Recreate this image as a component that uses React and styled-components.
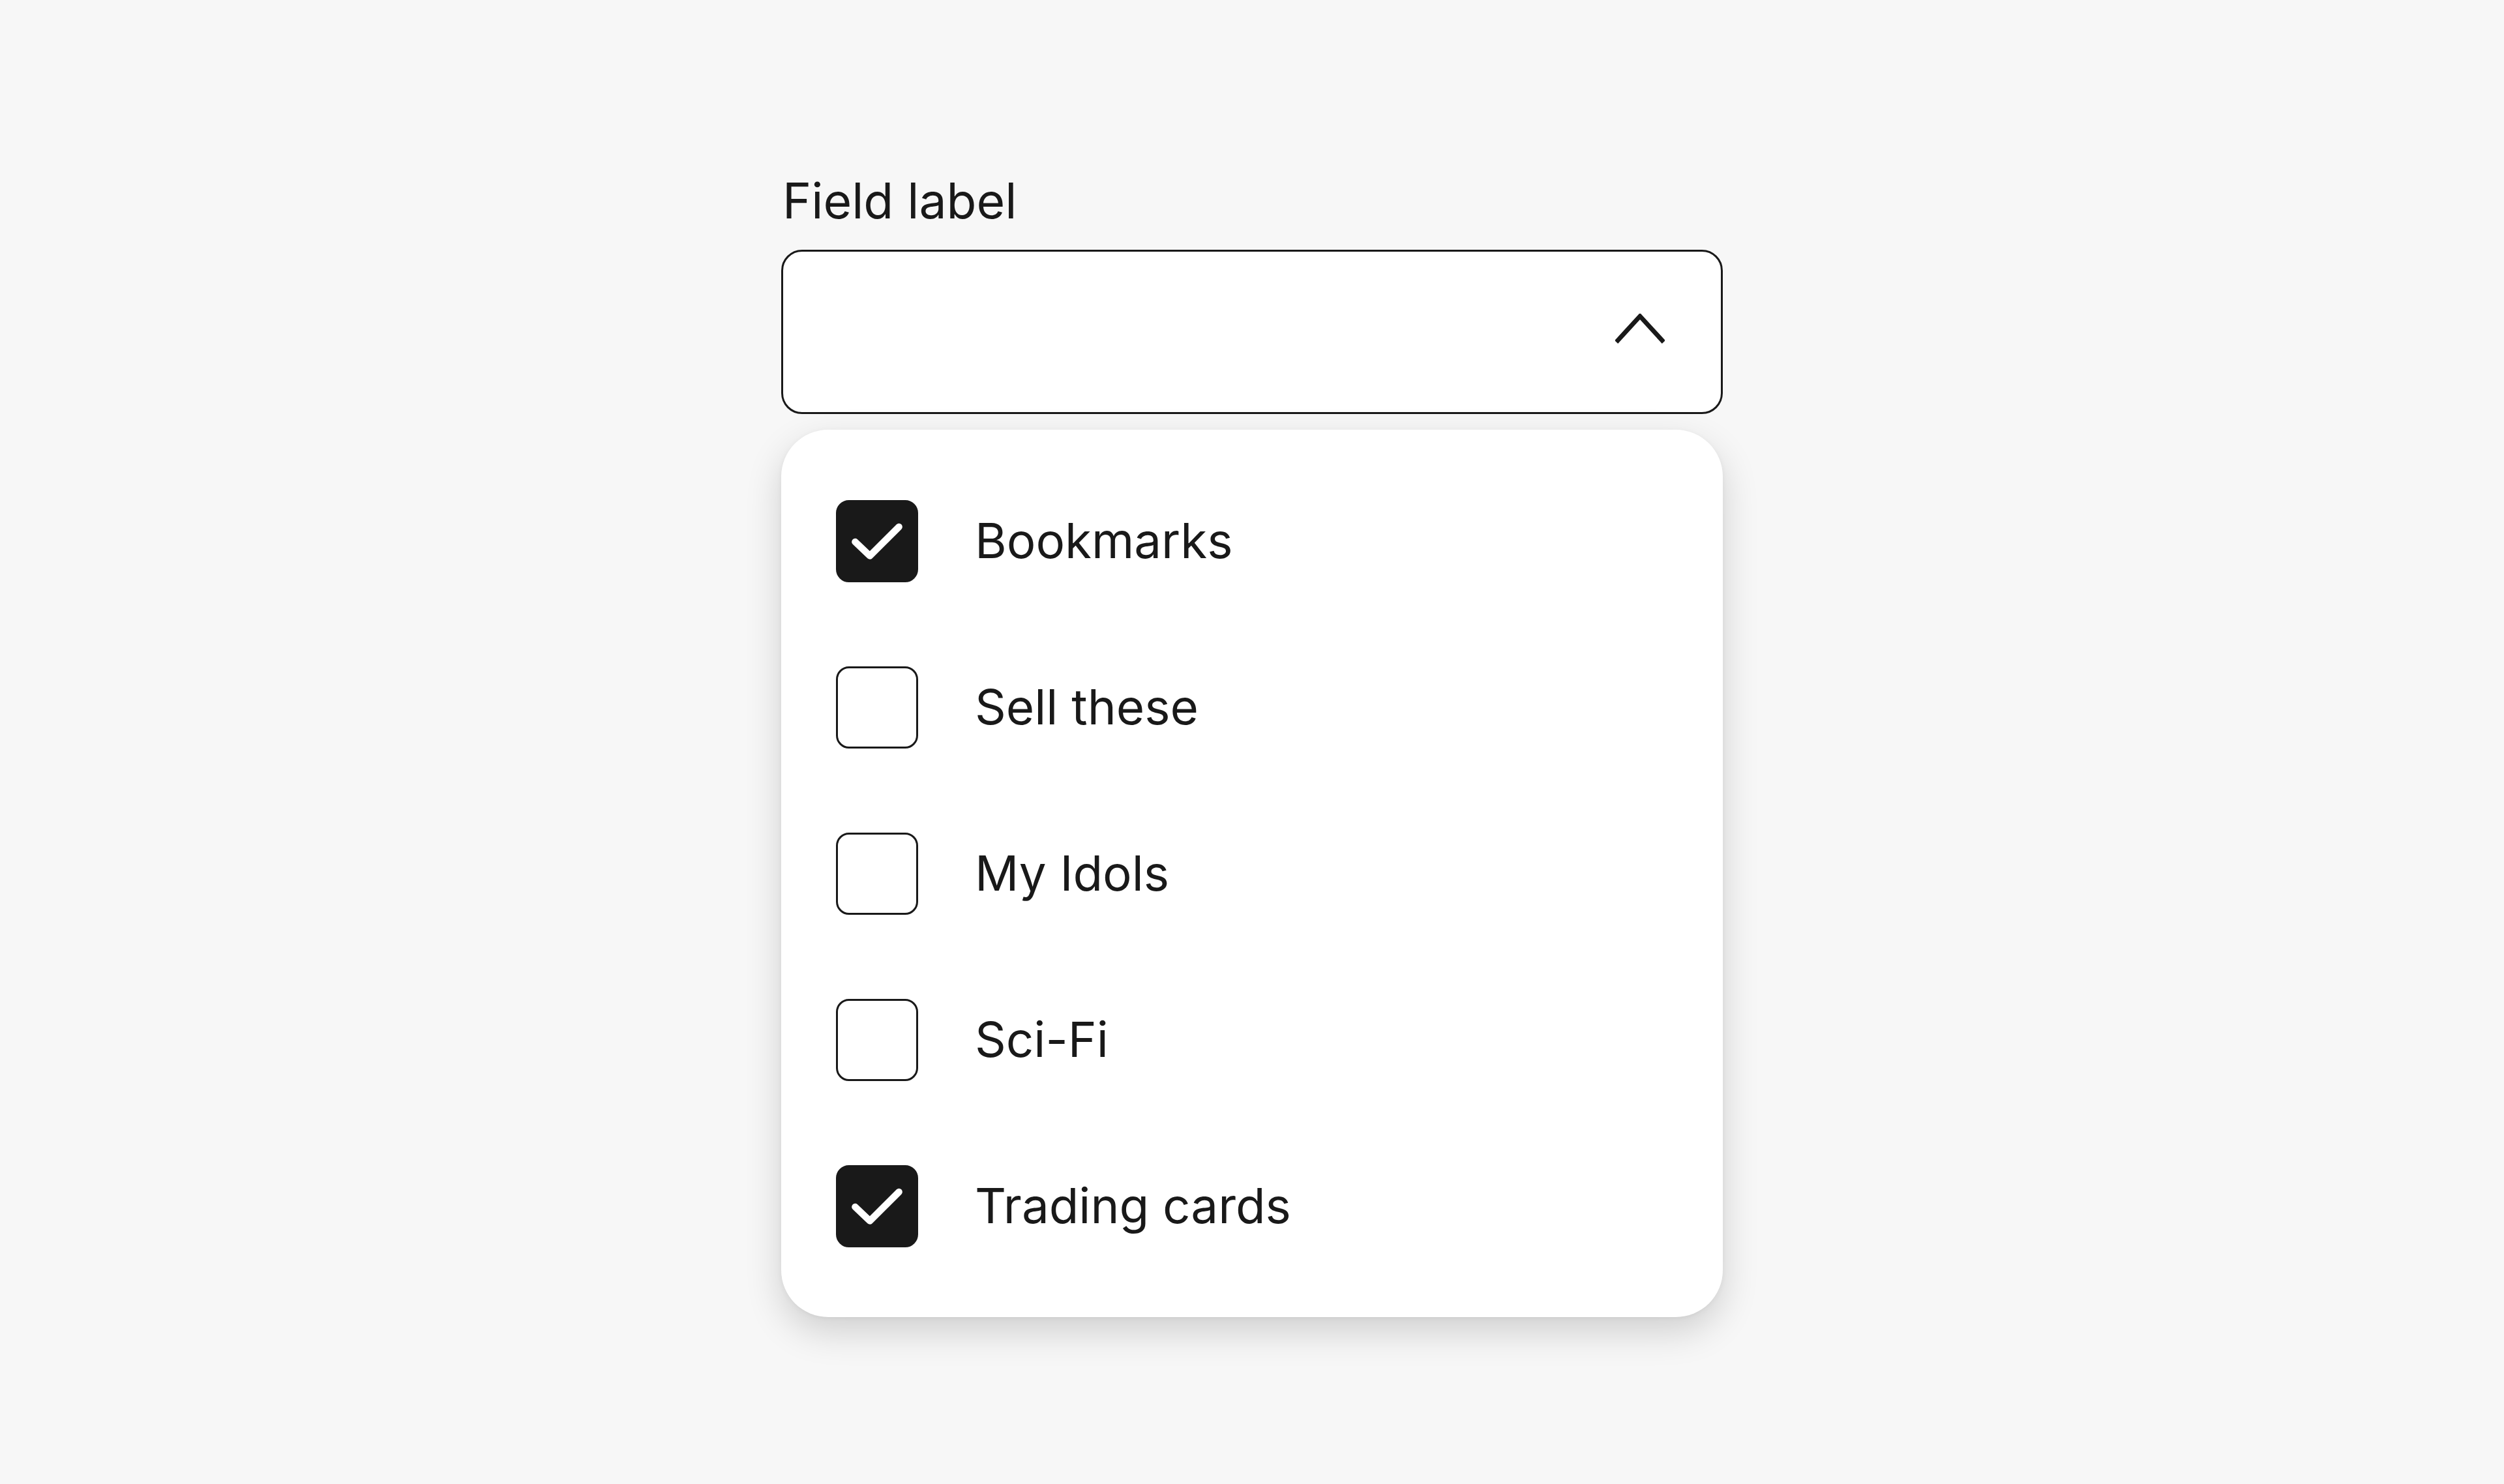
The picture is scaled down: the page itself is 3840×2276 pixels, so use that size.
import React, { useState } from 'react'
import styled, { createGlobalStyle } from 'styled-components'

const GlobalStyle = createGlobalStyle`
  html, body {
    margin: 0;
    padding: 0;
    background: #f7f7f7;
  }
  body {
    font-family: Inter, "Noto Sans", "Liberation Sans", sans-serif;
    color: #191919;
  }
`

const Page = styled.div`
  min-height: 2276px;
  display: flex;
  justify-content: center;
  padding-top: 270px;
  box-sizing: border-box;
`

const Field = styled.div`
  width: 1444px;
  display: flex;
  flex-direction: column;
`

const Label = styled.label`
  font-size: 75px;
  line-height: 75px;
  font-weight: 400;
  margin-bottom: 38px;
  padding-left: 2px;
`

const Trigger = styled.button`
  height: 252px;
  width: 100%;
  box-sizing: border-box;
  border: 3.5px solid #191919;
  border-radius: 32px;
  background: #fff;
  display: flex;
  align-items: center;
  justify-content: flex-end;
  padding: 0 86px 0 0;
  cursor: pointer;

  svg {
    margin-bottom: 10px;
  }
`

const Panel = styled.ul`
  list-style: none;
  margin: 24px 0 0;
  padding: 43px 0;
  background: #fff;
  border-radius: 72px;
  box-shadow: 0 22px 56px rgba(0, 0, 0, 0.16), 0 2px 8px rgba(0, 0, 0, 0.05);
`

const Row = styled.li`
  height: 255px;
  display: flex;
  align-items: center;
  gap: 87px;
  padding-left: 84px;
  cursor: pointer;
`

const Box = styled.span`
  width: 126px;
  height: 126px;
  flex: none;
  box-sizing: border-box;
  border-radius: 20px;
  border: 3.5px solid #191919;
  background: ${(p) => (p.$checked ? '#191919' : '#fff')};
  display: flex;
  align-items: center;
  justify-content: center;
`

const ItemText = styled.span`
  font-size: 74.5px;
  font-weight: 400;
  line-height: 1;
`

const Chevron = () => (
  <svg width="76" height="46" viewBox="0 0 76 46" fill="none">
    <path d="M4 41 L38 4 L72 41" stroke="#191919" strokeWidth="7" strokeLinecap="square" />
  </svg>
)

const Check = () => (
  <svg width="126" height="126" viewBox="0 0 24 24" fill="none" style={{ margin: '-3.5px' }}>
    <path
      d="M5.6 12.2 L9.9 16.3 L18.4 7.8"
      stroke="#fff"
      strokeWidth="2"
      strokeLinecap="round"
      strokeLinejoin="round"
    />
  </svg>
)

const initial = [
  { label: 'Bookmarks', checked: true },
  { label: 'Sell these', checked: false },
  { label: 'My Idols', checked: false },
  { label: 'Sci-Fi', checked: false },
  { label: 'Trading cards', checked: true },
]

export default function App() {
  const [items, setItems] = useState(initial)

  const toggle = (i) =>
    setItems((prev) => prev.map((it, idx) => (idx === i ? { ...it, checked: !it.checked } : it)))

  return (
    <>
      <GlobalStyle />
      <Page>
        <Field>
          <Label>Field label</Label>
          <Trigger aria-expanded="true">
            <Chevron />
          </Trigger>
          <Panel role="listbox">
            {items.map((it, i) => (
              <Row key={it.label} onClick={() => toggle(i)} role="option" aria-selected={it.checked}>
                <Box $checked={it.checked}>{it.checked && <Check />}</Box>
                <ItemText>{it.label}</ItemText>
              </Row>
            ))}
          </Panel>
        </Field>
      </Page>
    </>
  )
}
